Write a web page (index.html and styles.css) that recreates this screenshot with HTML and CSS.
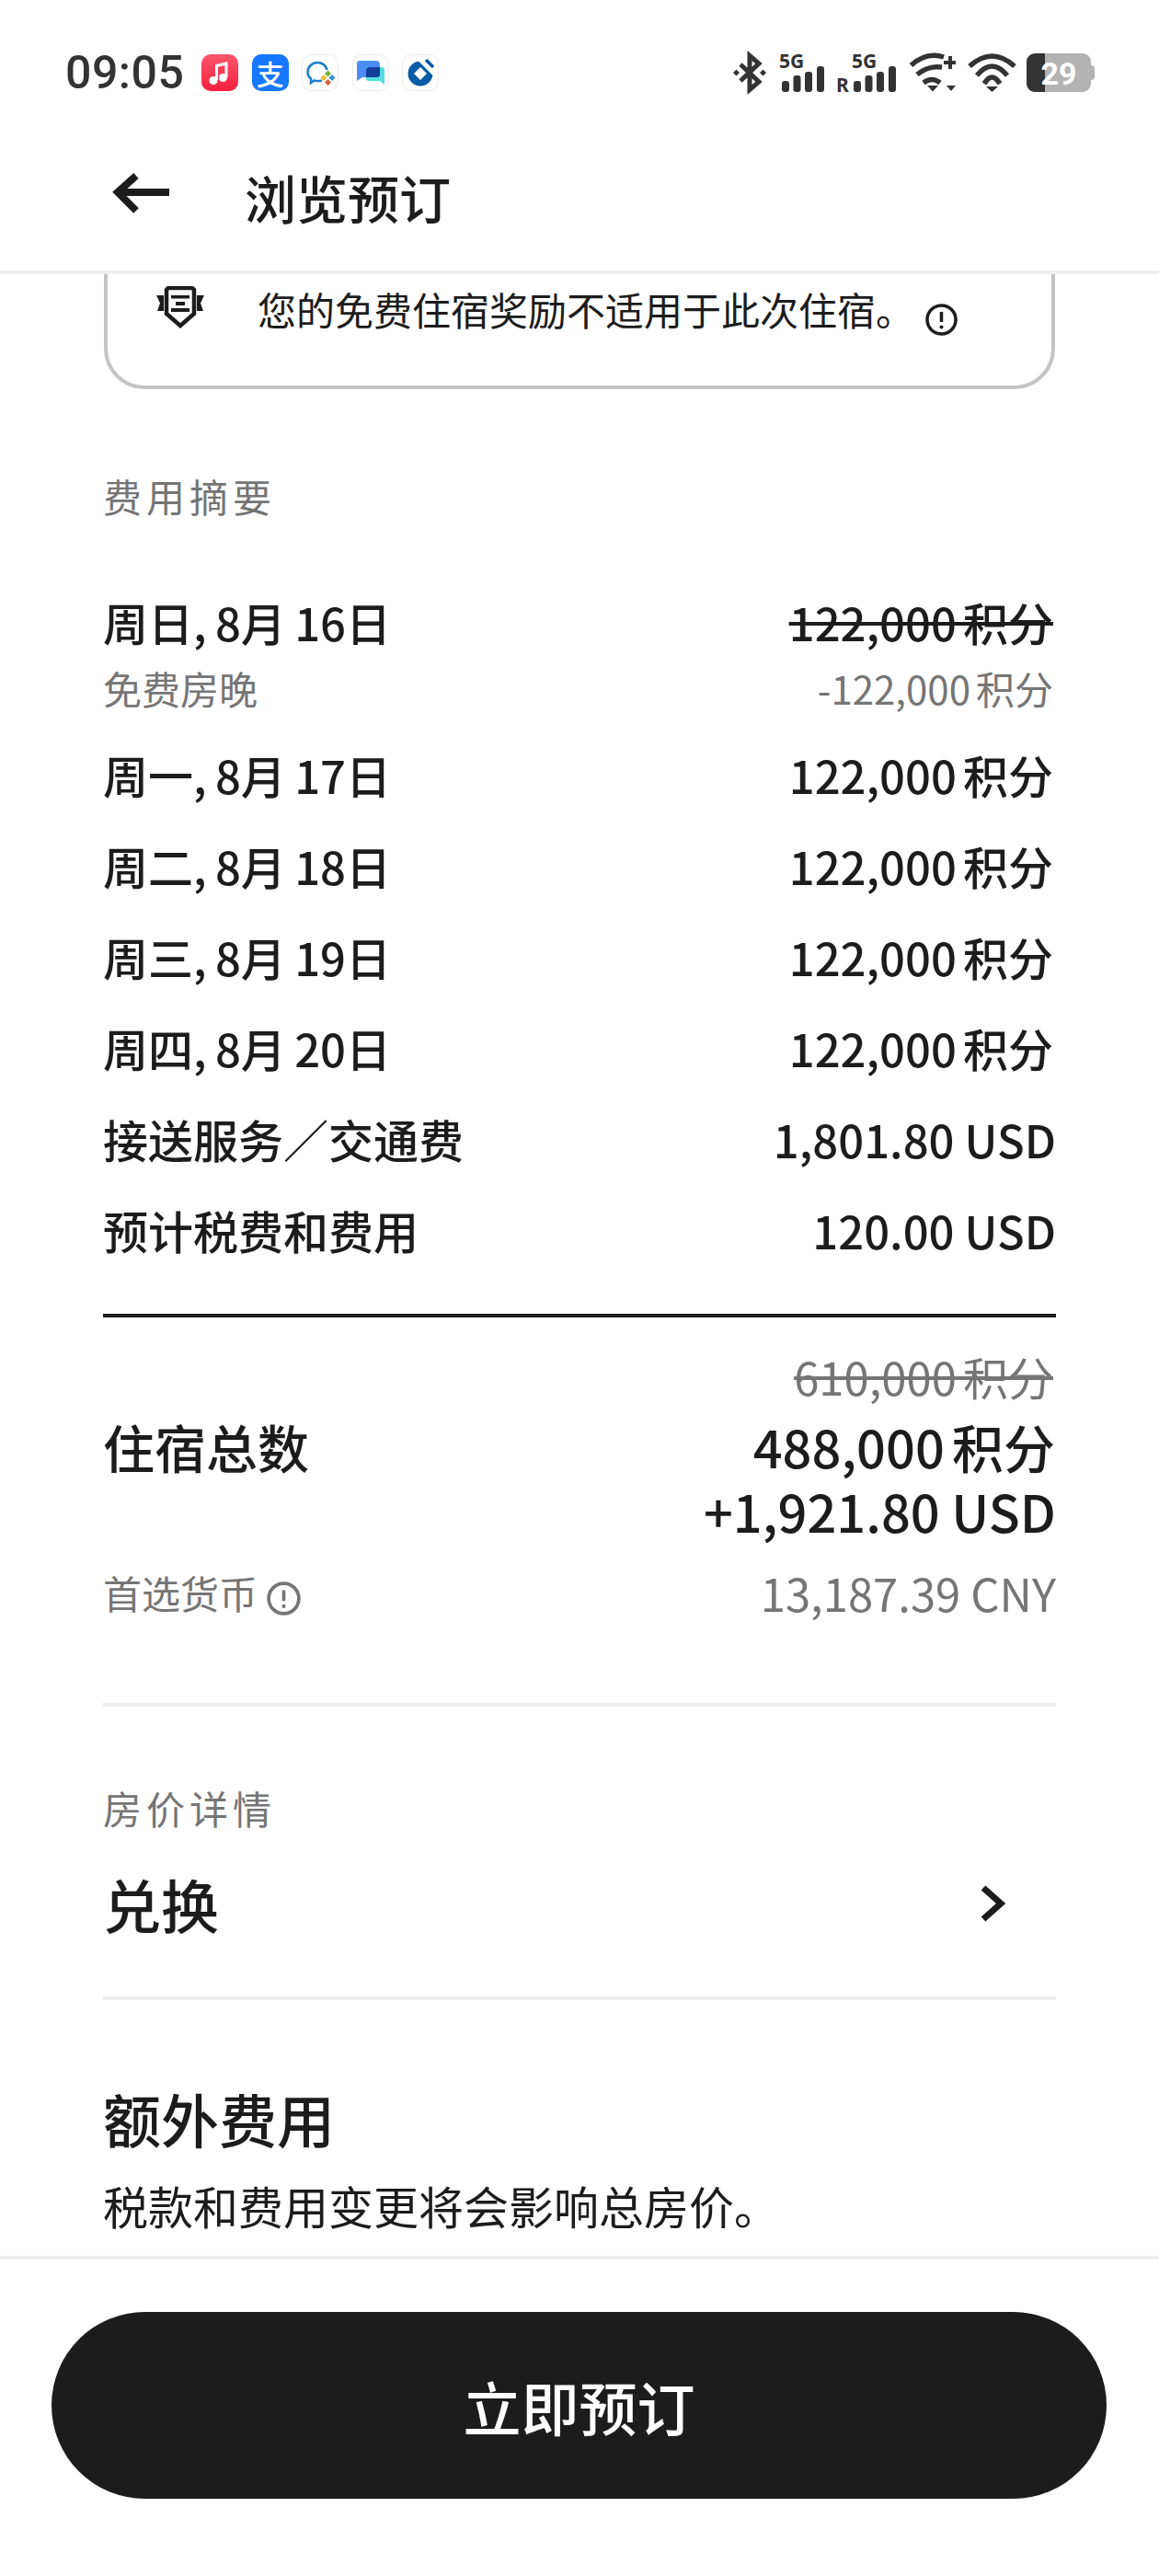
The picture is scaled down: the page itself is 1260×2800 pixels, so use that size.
FILE: index.html
```html
<!DOCTYPE html>
<html lang="zh-CN">
<head>
<meta charset="utf-8" />
<title>浏览预订</title>
<link rel="stylesheet" href="styles.css">
</head>

<body>
<div class="app">
    <div class="statusbar">
        <span class="time">09:05</span>
        <div class="appicons">
            <div class="tile tile-music">
                <svg width="40" height="40" viewBox="0 0 40 40"><path class="line-white" d="M16.500 28V12.500L27 10V25" /><circle class="fill-white" cx="13" cy="28.500" r="4.500" /><circle class="fill-white" cx="23.500" cy="25.500" r="4.500" /></svg>
            </div>
            <div class="tile tile-alipay">支</div>
            <div class="tile tile-plain">
                <svg width="40" height="40" viewBox="0 0 40 40">
                    <path class="wecom-line" d="M22 28.500C18 29.500 15 29 13.500 28.500L10 31V26.500C7.500 24.500 6.500 22 6.500 19.500C6.500 13.500 11.500 9 17 9C22 9 26.500 12 27.500 17" />
                    <path class="dot-green" d="M28.500 17.500L32 21L28.500 24.500L25 21Z" />
                    <path class="dot-yellow" d="M24 22L27.500 25.500L24 29L20.500 25.500Z" />
                    <path class="dot-blue" d="M33 22L36.500 25.500L33 29L29.500 25.500Z" />
                    <path class="dot-red" d="M28.500 27L32 30.500L28.500 34L25 30.500Z" />
                </svg>
            </div>
            <div class="tile tile-plain">
                <svg width="40" height="40" viewBox="0 0 40 40">
                    <path class="bubble-blue" d="M8 7H26C28.500 7 30 8.500 30 11V25H11L5 29V10C5 8 6 7 8 7Z" />
                    <path class="bubble-teal" d="M15 14H32C34 14 35 15 35 17V33L30 29H18C16 29 15 28 15 26Z" />
                    <path class="bubble-dark" d="M18 14H30V22C30 24 28.500 25 27 25H15V17C15 15 16 14 18 14Z" />
                </svg>
            </div>
            <div class="tile tile-plain">
                <svg width="40" height="40" viewBox="0 0 40 40">
                    <circle class="ccb-blue" cx="20" cy="21" r="13.500" />
                    <path class="fill-white" d="M20 14L27 21L20 28L13 21Z" />
                    <path class="ccb-cut" d="M21 4L37 20" />
                    <path class="ccb-bar" d="M26 6L34 14" />
                </svg>
            </div>
        </div>
        <div class="sysicons">
            <svg class="bt" width="36" height="42" viewBox="0 0 36 42">
                <path class="sys-line" d="M8 12L28 31L18 39.500V2.500L28 11L8 30" />
                <path class="sys-fill" d="M3.500 17.500L7 21L3.500 24.500L0 21ZM32.500 17.500L36 21L32.500 24.500L29 21Z" />
            </svg>
            <svg class="sig" width="50" height="42" viewBox="0 0 50 42">
                <text class="net-text" x="0" y="16">5G</text>
                <rect class="sys-fill" x="3" y="30" width="8" height="12" rx="3" />
                <rect class="sys-fill" x="15.500" y="24" width="8" height="18" rx="3" />
                <rect class="sys-fill" x="28" y="20" width="8" height="22" rx="3" />
                <rect class="sys-fill" x="41" y="14" width="8" height="28" rx="3" />
            </svg>
            <svg class="sig-r" width="66" height="42" viewBox="0 0 66 42">
                <text class="net-text" x="17" y="16">5G</text>
                <text class="net-text" x="0" y="42">R</text>
                <rect class="sys-fill" x="19" y="30" width="8" height="12" rx="3" />
                <rect class="sys-fill" x="31.500" y="24" width="8" height="18" rx="3" />
                <rect class="sys-fill" x="44" y="20" width="8" height="22" rx="3" />
                <rect class="sys-fill" x="57" y="14" width="8" height="28" rx="3" />
            </svg>
            <svg class="wifi-plus" width="50" height="42" viewBox="0 0 50 42">
                <path class="wifi-line" d="M1.500 13Q18 -2 37 4" />
                <path class="wifi-line" d="M8 23Q20 13 35 15" />
                <path class="wifi-line" d="M15 32Q24 25 33 32" />
                <path class="sys-fill" d="M19 35H31L25 41.500ZM40 35H50L45 41Z" />
                <path class="sys-fill" d="M42 3H46V8H50V12H46V17H42V12H37V8H42Z" />
            </svg>
            <svg class="wifi" width="53" height="42" viewBox="0 0 53 42">
                <path class="wifi-line" d="M2 14Q26.500 -8 51 14" />
                <path class="wifi-line" d="M10 24Q26.500 4 43 24" />
                <path class="wifi-line" d="M18 33Q26.500 19 35 33" />
                <path class="sys-fill" d="M20 36H33L26.500 42Z" />
            </svg>
            <div class="battery">29</div>
        </div>
    </div>

    <div class="topbar">
        <svg class="back" width="64" height="44" viewBox="0 0 64 44"><path class="nav-line" d="M63 21H8M27 3L7 21L27 41" /></svg>
        <span class="topbar-title">浏览预订</span>
    </div>

    <div class="content">
        <div class="notice">
            <svg class="notice-icon" width="52" height="46" viewBox="0 0 52 46">
                <path class="shield-line" d="M13 2H39L41 4V30L26 43L11 30V4Z" />
                <path class="nav-fill" d="M16 10H36V13.500H16ZM21 17H31V21H21ZM16 24H36V28H16ZM0 10H8V27H1L4 18.500ZM52 10H44V27H51L48 18.500Z" />
            </svg>
            <span class="notice-text">您的免费住宿奖励不适用于此次住宿。</span>
            <svg class="info" width="35" height="35" viewBox="0 0 35 35"><circle class="info-line" cx="17.500" cy="17.500" r="15.500" /><path class="info-line" d="M17.500 9V20" /><circle class="nav-fill" cx="17.500" cy="25.500" r="2" /></svg>
        </div>

        <div class="caption summary-caption">费用摘要</div>

        <div class="fee-list">
            <div class="fee-group">
                <div class="fee-row"><span class="date">周日, 8月 16日</span><s class="pts">122,000 积分</s></div>
                <div class="fee-row fee-sub"><span>免费房晚</span><span class="pts">-122,000 积分</span></div>
            </div>
            <div class="fee-row"><span class="date">周一, 8月 17日</span><span class="pts">122,000 积分</span></div>
            <div class="fee-row"><span class="date">周二, 8月 18日</span><span class="pts">122,000 积分</span></div>
            <div class="fee-row"><span class="date">周三, 8月 19日</span><span class="pts">122,000 积分</span></div>
            <div class="fee-row"><span class="date">周四, 8月 20日</span><span class="pts">122,000 积分</span></div>
            <div class="fee-row"><span>接送服务／交通费</span><span>1,801.80 USD</span></div>
            <div class="fee-row"><span>预计税费和费用</span><span>120.00 USD</span></div>
        </div>

        <div class="rule-dark"></div>

        <div class="total-old"><s class="pts">610,000 积分</s></div>
        <div class="total-row">
            <span>住宿总数</span>
            <div class="total-amount"><span class="pts">488,000 积分</span><br />+1,921.80 USD</div>
        </div>
        <div class="currency-row">
            <span class="currency-label">首选货币
                <svg class="info-grey" width="37" height="37" viewBox="0 0 35 35"><circle class="info-line" cx="17.500" cy="17.500" r="15.500" /><path class="info-line" d="M17.500 9V20" /><circle class="grey-fill" cx="17.500" cy="25.500" r="2" /></svg>
            </span>
            <span class="currency-value">13,187.39 CNY</span>
        </div>

        <div class="rule-light rule-after-total"></div>

        <div class="caption rate-caption">房价详情</div>
        <div class="rate-row">
            <span>兑换</span>
            <svg class="chevron" width="28" height="40" viewBox="0 0 28 40"><path class="chevron-line" d="M4 3L23 20L4 37" /></svg>
        </div>
        <div class="rule-light rule-after-rate"></div>

        <div class="extra-title">额外费用</div>
        <div class="extra-text">税款和费用变更将会影响总房价。</div>
    </div>

    <div class="bottombar">
        <button class="book-btn" type="button">立即预订</button>
    </div>
</div>
</body>
</html>
```

FILE: styles.css
```css
html, body {
    margin:0;
    padding:0;
    background:#fff;
}
body {
    font-family:"Noto Sans CJK SC", "Noto Sans", sans-serif;
    color:#1c1c1c;
}
.app {
    display:flex;
    flex-direction:column;
    height:2800px;
    overflow:hidden;
}

/* status bar */
.statusbar {
    display:flex;
    align-items:center;
    height:70px;
    padding:44px 70px 0 71px;
}
.time {
    font-family:Roboto, sans-serif;
    font-size:50px;
    font-weight:500;
    letter-spacing:.5px;
    color:#333;
    line-height:70px;
}
.appicons {
    display:flex;
    gap:14.5px;
    margin-left:19px;
}
.tile {
    width:40px;
    height:40px;
    border-radius:10px;
    box-sizing:border-box;
    overflow:hidden;
}
.tile svg {
    display:block;
}
.tile-music {
    background:linear-gradient(#f9566c, #f5203f);
}
.tile-alipay {
    overflow:visible;
    background:#1677ff;
    color:#fff;
    font-size:30px;
    font-weight:500;
    line-height:40px;
    text-align:center;
}
.tile-plain {
    background:#fff;
    box-shadow:inset 0 0 0 1px #eee;
}
.line-white {
    fill:none;
    stroke:#fff;
    stroke-width:3;
}
.fill-white {
    fill:#fff;
}
.wecom-line {
    fill:none;
    stroke:#1d7fc8;
    stroke-width:2.5;
}
.dot-green { fill:#6fb53c; }
.dot-yellow { fill:#f3bd2e; }
.dot-blue { fill:#3a92d8; }
.dot-red { fill:#d4603c; }
.bubble-blue { fill:#4d8df6; }
.bubble-teal { fill:#53dfe0; }
.bubble-dark { fill:#133f9c; }
.ccb-blue { fill:#0a5ba6; }
.ccb-cut {
    stroke:#fff;
    stroke-width:9;
}
.ccb-bar {
    stroke:#0a5ba6;
    stroke-width:3.5;
}

.sysicons {
    display:flex;
    align-items:flex-start;
    margin-left:auto;
}
.sysicons svg {
    display:block;
    overflow:visible;
}
.sig { margin-left:14px; }
.sig-r { margin-left:12px; }
.wifi-plus { margin-left:14px; }
.wifi { margin-left:13px; }
.sys-line {
    fill:none;
    stroke:#333;
    stroke-width:5;
}
.sys-fill {
    fill:#333;
}
.wifi-line {
    fill:none;
    stroke:#333;
    stroke-width:5.5;
}
.net-text {
    font-family:"Noto Sans", sans-serif;
    font-size:21px;
    font-weight:700;
    fill:#333;
}
.battery {
    position:relative;
    width:70px;
    height:42px;
    margin:0 4px 0 11px;
    border-radius:9px;
    background:linear-gradient(90deg, #333 20px, #b3b3b3 20px);
    color:#fff;
    font-family:Roboto, sans-serif;
    font-size:34px;
    font-weight:700;
    line-height:44px;
    text-align:center;
}
.battery::after {/* battery nub */
    content:"";
    position:absolute;
    left:70px;
    top:13px;
    width:4px;
    height:16px;
    border-radius:0 4px 4px 0;
    background:#b3b3b3;
}

/* top bar */
.topbar {
    display:flex;
    align-items:center;
    box-sizing:border-box;
    height:184px;
    padding:20px 0 0 121px;
    border-bottom:4px solid #eee;
}
.back {
    display:block;
    margin-top:-8px;
}
.nav-line {
    fill:none;
    stroke:#1c1c1c;
    stroke-width:8;
}
.nav-fill {
    fill:#1c1c1c;
}
.grey-fill {
    fill:#757575;
}
.topbar-title {
    margin-left:81px;
    font-size:56px;
    font-weight:500;
    line-height:80px;
}

/* content */
.content {
    flex:1;
    padding:0 112px;
    overflow:hidden;
}
.notice {
    display:flex;
    align-items:flex-start;
    height:121px;
    margin:0 1px 86px;
    border:4px solid #c4c4c4;
    border-top:none;
    border-radius:0 0 44px 44px;
}
.notice-icon {
    margin:13px 0 0 53px;
}
.notice-text {
    margin:8px 0 0 58px;
    font-size:42px;
    line-height:60px;
}
.info {
    margin:32px 0 0 12px;
}
.info-line {
    fill:none;
    stroke:#1c1c1c;
    stroke-width:3.5;
}
.info-grey .info-line {
    stroke:#757575;
}

.caption {
    font-size:42px;
    line-height:60px;
    letter-spacing:5px;
    color:#757575;
}
.fee-list {
    margin-top:71px;
}
.fee-row {
    display:flex;
    justify-content:space-between;
    margin-bottom:27px;
    font-size:49px;
    font-weight:500;
    line-height:72px;
}
.fee-group {
    margin-bottom:22px;
}
.fee-group .fee-row {
    margin-bottom:0;
}
.fee-sub {
    font-size:42px;
    font-weight:400;
    color:#757575;
}
.date {
    word-spacing:-.035em;
}
.pts {
    margin-right:3px;
    word-spacing:-.08em;
}
.rule-dark {
    height:4px;
    margin-top:55px;
    background:#1c1c1c;
}
.rule-light {
    height:4px;
    background:#eee;
}

/* total */
.total-old {
    margin-top:34px;
    font-size:49px;
    line-height:60px;
    text-align:right;
    color:#757575;
}
.total-row {
    display:flex;
    justify-content:space-between;
    margin-top:11px;
    font-size:56px;
    font-weight:500;
    line-height:70px;
}
.total-amount {
    text-align:right;
}
.total-amount .pts {
    margin-right:1px;
}
.currency-row {
    display:flex;
    justify-content:space-between;
    align-items:center;
    margin-top:24px;
    line-height:60px;
    color:#757575;
}
.currency-label {
    display:flex;
    align-items:center;
    font-size:42px;
}
.info-grey {
    margin:13px 0 0 10px;
}
.currency-value {
    font-size:49px;
}
.rule-after-total {
    margin-top:90px;
}

.rate-caption {
    margin-top:80px;
}
.rate-row {
    display:flex;
    justify-content:space-between;
    align-items:center;
    margin-top:34px;
    padding-right:55px;
    font-size:63px;
    font-weight:500;
    line-height:80px;
}
.rule-after-rate {
    margin-top:61px;
}
.extra-title {
    margin-top:88px;
    font-size:63px;
    font-weight:500;
    line-height:80px;
}
.extra-text {
    margin-top:25px;
    font-size:49px;
    line-height:60px;
}

/* bottom button */
.bottombar {
    height:348px;
    box-sizing:border-box;
    border-top:4px solid #eee;
    padding:57px 57px 0 56px;
}
.book-btn {
    display:block;
    width:100%;
    height:203px;
    border:none;
    border-radius:102px;
    background:#1c1c1c;
    color:#fff;
    font-family:"Noto Sans CJK SC", "Noto Sans", sans-serif;
    font-size:63px;
    font-weight:500;
}
.chevron-line {
    fill:none;
    stroke:#1c1c1c;
    stroke-width:7;
}
.shield-line {
    fill:none;
    stroke:#1c1c1c;
    stroke-width:4.5;
}
```
